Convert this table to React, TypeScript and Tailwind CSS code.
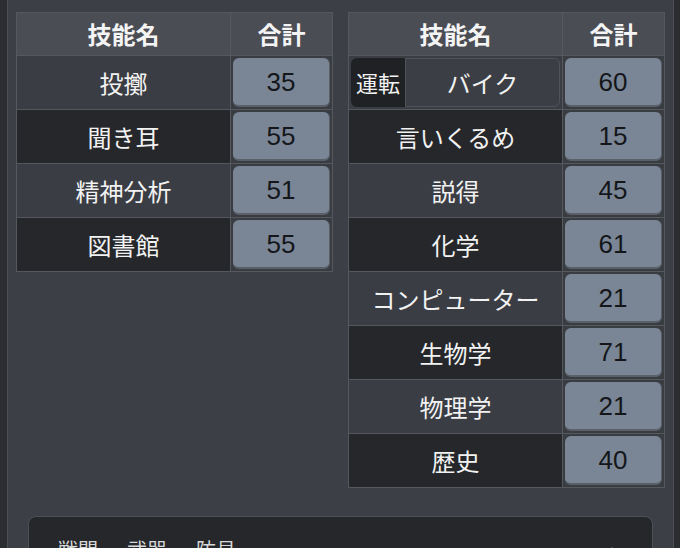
import React from 'react';

type Skill = { name: string; total: number; group?: string };

const leftSkills: Skill[] = [
  { name: '投擲', total: 35 },
  { name: '聞き耳', total: 55 },
  { name: '精神分析', total: 51 },
  { name: '図書館', total: 55 },
];

const rightSkills: Skill[] = [
  { name: 'バイク', total: 60, group: '運転' },
  { name: '言いくるめ', total: 15 },
  { name: '説得', total: 45 },
  { name: '化学', total: 61 },
  { name: 'コンピューター', total: 21 },
  { name: '生物学', total: 71 },
  { name: '物理学', total: 21 },
  { name: '歴史', total: 40 },
];

const jp = { fontFamily: '"Noto Sans CJK JP", "Noto Sans", sans-serif' };
const num = { fontFamily: '"Liberation Sans", Arial, sans-serif' };

function SkillRow({ skill, dark }: { skill: Skill; dark: boolean }) {
  return (
    <div className="flex h-[54px] border-t border-[#55585e]">
      {skill.group ? (
        <div className="flex flex-1 border-r border-[#55585e] bg-[#3a3d43] p-[2px]">
          <div className="flex w-[54px] items-center justify-center rounded-l-[6px] bg-[#1f2124] text-[22px] text-[#f2f2f2]">
            {skill.group}
          </div>
          <div className="flex flex-1 items-center justify-center rounded-r-[6px] border border-[#505359] bg-[#3b3e44] text-[24px] text-[#f2f2f2]">
            {skill.name}
          </div>
        </div>
      ) : (
        <div
          className={
            dark
              ? 'flex flex-1 items-center justify-center border-r border-[#55585e] bg-[#25272b] text-[24px] text-[#f2f2f2]'
              : 'flex flex-1 items-center justify-center border-r border-[#55585e] bg-[#3a3d43] text-[24px] text-[#f2f2f2]'
          }
        >
          {skill.name}
        </div>
      )}
      <div className="w-[101px] bg-[#393c41] p-[2px]">
        <div
          className="flex h-full items-center justify-center rounded-[6px] border-b-2 border-r border-[#596069] bg-[#7a8696] pt-[2px] text-[26px] text-[#14161a]"
          style={num}
        >
          {skill.total}
        </div>
      </div>
    </div>
  );
}

function SkillTable({ skills }: { skills: Skill[] }) {
  return (
    <div className="w-[317px] border border-[#55585e] bg-[#3a3d43]">
      <div className="flex h-[42px] bg-[#4a4d54] text-[24px] font-bold text-[#f4f4f4]">
        <div className="flex flex-1 items-center justify-center border-r border-[#55585e]">技能名</div>
        <div className="flex w-[101px] items-center justify-center">合計</div>
      </div>
      {skills.map((s, i) => (
        <SkillRow key={s.name} skill={s} dark={i % 2 === 1} />
      ))}
    </div>
  );
}

export default function App() {
  return (
    <div className="flex h-[548px] w-[680px] overflow-hidden bg-[#2b2d31]" style={jp}>
      <div className="ml-[7px] flex w-[667px] flex-col border-x border-[#4b4e54] bg-[#3c3f45] px-[8px] pt-[12px]">
        <div className="flex items-start gap-[15px]">
          <SkillTable skills={leftSkills} />
          <SkillTable skills={rightSkills} />
        </div>

        {/* Combat / weapons / armour section */}
        <div className="mx-[12px] mt-[28px] h-[90px] rounded-[8px] border border-[#4d5056] bg-[#25272b] px-[29px] pt-[18px]">
          <div className="flex items-center justify-between">
            <span className="text-[20px] text-[#d8d8d8]">戦闘 ・ 武器 ・ 防具</span>
            <svg className="mr-[4px] h-[14px] w-[14px] text-[#cfcfcf]" viewBox="0 0 24 24" fill="none" stroke="currentColor" strokeWidth="2.5" strokeLinecap="round" strokeLinejoin="round">
              <path d="M6 15l6-6 6 6" />
            </svg>
          </div>
        </div>
      </div>
    </div>
  );
}
